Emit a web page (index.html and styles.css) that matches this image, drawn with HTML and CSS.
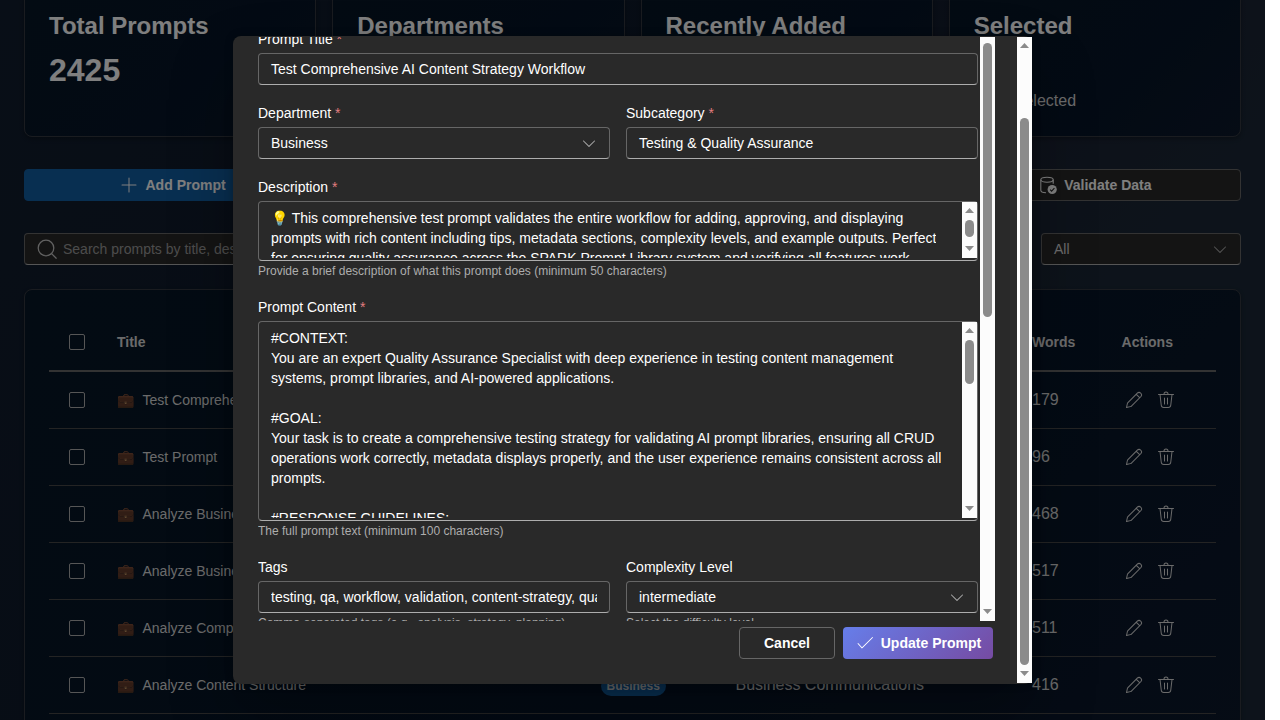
FILE: index.html
```html
<!DOCTYPE html>
<html lang="en">
<head>
<meta charset="utf-8">
<title>Prompt Library</title>
<link rel="stylesheet" href="styles.css">
</head>
<body>
<svg class="sprite" aria-hidden="true">
  <symbol id="edit" viewBox="0 0 20 20"><path d="M17.18 2.93a2.97 2.97 0 0 0-4.26-.06l-9.37 9.38c-.33.33-.56.74-.66 1.2l-.88 3.94a.5.5 0 0 0 .6.6l3.92-.87c.46-.1.9-.34 1.23-.68l9.36-9.36a2.97 2.97 0 0 0 .06-4.15Zm-3.55.65a1.97 1.97 0 1 1 2.8 2.8l-.68.66-2.8-2.8.68-.66Zm-1.38 1.38 2.8 2.8-7.99 7.97c-.2.2-.46.35-.74.41l-3.16.7.7-3.18c.07-.27.2-.51.4-.7l8-8Z"/></symbol>
  <symbol id="trash" viewBox="0 0 20 20"><path d="M8.5 4h3a1.5 1.5 0 0 0-3 0Zm-1 0a2.5 2.5 0 0 1 5 0h5a.5.5 0 0 1 0 1h-1.05l-1.2 10.34A3 3 0 0 1 12.27 18H7.73a3 3 0 0 1-2.98-2.66L3.55 5H2.5a.5.5 0 0 1 0-1h5ZM5.74 15.23A2 2 0 0 0 7.73 17h4.54a2 2 0 0 0 1.99-1.77L15.44 5H4.56l1.18 10.23ZM8.5 7.5c.28 0 .5.22.5.5v6a.5.5 0 0 1-1 0V8c0-.28.22-.5.5-.5ZM12 8a.5.5 0 0 0-1 0v6a.5.5 0 0 0 1 0V8Z"/></symbol>
  <symbol id="chevron" viewBox="0 0 20 20"><path d="M15.85 7.65c.2.2.2.5 0 .7l-5.46 5.49a.55.55 0 0 1-.78 0L4.15 8.35a.5.5 0 1 1 .7-.7L10 12.8l5.15-5.16c.2-.2.5-.2.7 0Z"/></symbol>
  <symbol id="check" viewBox="0 0 20 20"><path d="M3.37 10.17a.5.5 0 0 0-.74.66l4 4.5c.19.22.52.23.72.02l10.5-10.5a.5.5 0 0 0-.7-.7L7.02 14.27l-3.65-4.1Z"/></symbol>
  <symbol id="plus" viewBox="0 0 20 20"><path d="M10 2.5c.28 0 .5.22.5.5v6.5H17a.5.5 0 0 1 0 1h-6.5V17a.5.5 0 0 1-1 0v-6.5H3a.5.5 0 0 1 0-1h6.5V3c0-.28.22-.5.5-.5Z"/></symbol>
  <symbol id="search" viewBox="0 0 20 20"><g fill="none" stroke="currentColor" stroke-width="1.25" stroke-linecap="round"><circle cx="9" cy="9" r="7.8"/><path d="M14.6 14.6 19.2 19.2"/></g></symbol>
  <symbol id="database" viewBox="0 0 20 20"><g fill="none" stroke="currentColor" stroke-width="1.1"><ellipse cx="9" cy="4.7" rx="6.2" ry="2.5"/><path d="M2.8 4.7v10.6c0 1.5 2.2 2.4 5.2 2.5M15.2 4.7v4"/></g><circle cx="14.2" cy="14.5" r="4.6"/><path d="m12.1 14.7 1.5 1.5 2.8-3" fill="none" stroke="#292929" stroke-width="1.1"/></symbol>
  <symbol id="up" viewBox="0 0 15 15"><path d="M7.5 6 12 11H3Z"/></symbol>
  <symbol id="down" viewBox="0 0 15 15"><path d="M3 3h9L7.5 8Z"/></symbol>
</svg>

<div class="app">
  <div class="page">
    <section class="stats">
      <div class="card stat"><h2>Total Prompts</h2><p class="number">2425</p></div>
      <div class="card stat"><h2>Departments</h2></div>
      <div class="card stat"><h2>Recently Added</h2></div>
      <div class="card stat"><h2>Selected</h2><p class="note">None selected</p></div>
    </section>
    <section class="toolbar">
      <button class="btn primary"><svg class="icon"><use href="#plus"/></svg>Add Prompt</button>
      <button class="btn"></button>
      <button class="btn"></button>
      <button class="btn"><svg class="icon"><use href="#database"/></svg>Validate Data</button>
    </section>
    <section class="filters">
      <div class="field search"><svg class="icon"><use href="#search"/></svg><span>Search prompts by title, description</span></div>
      <div class="field select"><span>All</span><svg class="icon"><use href="#chevron"/></svg></div>
    </section>
    <section class="card table">
      <div class="row head"><i class="box"></i><span>Title</span><span></span><span></span><span>Words</span><span>Actions</span></div>
      <div class="row"><i class="box"></i><span class="name"><b>💼</b>Test Comprehensive</span><span></span><span></span><span class="num">179</span><span class="actions"><svg class="icon"><use href="#edit"/></svg><svg class="icon"><use href="#trash"/></svg></span></div>
      <div class="row"><i class="box"></i><span class="name"><b>💼</b>Test Prompt</span><span></span><span></span><span class="num">96</span><span class="actions"><svg class="icon"><use href="#edit"/></svg><svg class="icon"><use href="#trash"/></svg></span></div>
      <div class="row"><i class="box"></i><span class="name"><b>💼</b>Analyze Business</span><span></span><span></span><span class="num">468</span><span class="actions"><svg class="icon"><use href="#edit"/></svg><svg class="icon"><use href="#trash"/></svg></span></div>
      <div class="row"><i class="box"></i><span class="name"><b>💼</b>Analyze Business</span><span></span><span></span><span class="num">517</span><span class="actions"><svg class="icon"><use href="#edit"/></svg><svg class="icon"><use href="#trash"/></svg></span></div>
      <div class="row"><i class="box"></i><span class="name"><b>💼</b>Analyze Competitor</span><span></span><span></span><span class="num">511</span><span class="actions"><svg class="icon"><use href="#edit"/></svg><svg class="icon"><use href="#trash"/></svg></span></div>
      <div class="row"><i class="box"></i><span class="name"><b>💼</b>Analyze Content Structure</span><span><em class="badge">Business</em></span><span class="num">Business Communications</span><span class="num">416</span><span class="actions"><svg class="icon"><use href="#edit"/></svg><svg class="icon"><use href="#trash"/></svg></span></div>
      <div class="row"></div>
    </section>
  </div>

  <div class="backdrop">
    <div class="dialog">
      <div class="content">
        <div class="scroll">
          <form class="form">
            <div class="group plain"><label>Prompt Title <i>*</i></label><div class="input">Test Comprehensive AI Content Strategy Workflow</div></div>
            <div class="pair plain">
              <div class="group"><label>Department <i>*</i></label><div class="input"><span>Business</span><svg class="icon"><use href="#chevron"/></svg></div></div>
              <div class="group"><label>Subcategory <i>*</i></label><div class="input">Testing &amp; Quality Assurance</div></div>
            </div>
            <div class="group">
              <label>Description <i>*</i></label>
              <div class="area short">
                <div class="text">💡 This comprehensive test prompt validates the entire workflow for adding, approving, and displaying
prompts with rich content including tips, metadata sections, complexity levels, and example outputs. Perfect
for ensuring quality assurance across the SPARK Prompt Library system and verifying all features work</div>
                <div class="bar"><svg><use href="#up"/></svg><i class="thumb t-short"></i><svg><use href="#down"/></svg></div>
              </div>
              <small>Provide a brief description of what this prompt does (minimum 50 characters)</small>
            </div>
            <div class="group">
              <label>Prompt Content <i>*</i></label>
              <div class="area tall">
                <div class="text">#CONTEXT:
You are an expert Quality Assurance Specialist with deep experience in testing content management
systems, prompt libraries, and AI-powered applications.

#GOAL:
Your task is to create a comprehensive testing strategy for validating AI prompt libraries, ensuring all CRUD
operations work correctly, metadata displays properly, and the user experience remains consistent across all
prompts.

#RESPONSE GUIDELINES:</div>
                <div class="bar"><svg><use href="#up"/></svg><i class="thumb t-tall"></i><svg><use href="#down"/></svg></div>
              </div>
              <small>The full prompt text (minimum 100 characters)</small>
            </div>
            <div class="pair">
              <div class="group"><label>Tags</label><div class="input"><span class="clip">testing, qa, workflow, validation, content-strategy, quality</span></div><small>Comma-separated tags (e.g., analysis, strategy, planning)</small></div>
              <div class="group"><label>Complexity Level</label><div class="input"><span>intermediate</span><svg class="icon"><use href="#chevron"/></svg></div><small>Select the difficulty level</small></div>
            </div>
          </form>
          <div class="bar"><i class="thumb t-form"></i><svg><use href="#down"/></svg></div>
        </div>
        <div class="footer">
          <button class="btn cancel">Cancel</button>
          <button class="btn update"><svg class="icon"><use href="#check"/></svg>Update Prompt</button>
        </div>
      </div>
      <div class="bar"><svg><use href="#up"/></svg><i class="thumb t-dialog"></i><svg><use href="#down"/></svg></div>
    </div>
  </div>
</div>
</body>
</html>
```
FILE: styles.css
```css
* { box-sizing: border-box; }
body {
  margin: 0;
  height: 720px;
  overflow: hidden;
  background: #fff;
  font: 14px/20px "Liberation Sans", Arial, sans-serif;
}
h2, p { margin: 0; }
.sprite { position: absolute; width: 0; height: 0; }
.app {
  position: relative;
  width: 1265px;
  height: 720px;
  overflow: hidden;
  background: linear-gradient(135deg, #111d2e 0%, #0f1a2b 40%, #1b2233 58%, #1a2736 70%, #1a2736 100%);
  color: #fff;
}
.page { padding: 0 24px; }
.icon { width: 20px; height: 20px; flex: none; fill: currentColor; }

.card {
  background: linear-gradient(135deg, #071626, #061528 60%, #0c182b);
  border: 1px solid #343840;
  border-radius: 8px;
  box-shadow: 0 2px 4px rgba(0, 0, 0, .28);
}
.stats, .toolbar { display: grid; grid-template-columns: repeat(4, 1fr); gap: 16px; }
.stat { height: 145px; margin-top: -8px; padding: 17px 24px; }
.stat h2 { font-size: 24px; line-height: 32px; white-space: nowrap; }
.number { font-size: 32px; line-height: 40px; font-weight: 700; margin-top: 8px; }
.note { font-size: 16px; line-height: 24px; margin-top: 47px; color: #d6d6d6; }

.toolbar { margin-top: 32px; }
.btn {
  display: flex;
  align-items: center;
  justify-content: center;
  gap: 6px;
  height: 32px;
  padding: 0 12px;
  border: 1px solid #666;
  border-radius: 4px;
  background: #292929;
  color: #fff;
  font: 700 14px/20px "Liberation Sans", Arial, sans-serif;
  letter-spacing: .02px;
  white-space: nowrap;
}
.btn.primary { background: #115ea3; border-color: #115ea3; padding-left: 17px; }

.filters { display: flex; gap: 16px; margin-top: 32px; }
.field {
  display: flex;
  align-items: center;
  height: 32px;
  padding: 0 12px;
  border: 1px solid #666;
  border-bottom-color: #adadad;
  border-radius: 4px;
  background: #292929;
  color: #d6d6d6;
}
.search { flex: 1; gap: 6px; color: #999; }
.search .icon { color: #c4c4c4; }
.select { width: 200px; justify-content: space-between; padding-right: 10px; }
.select .icon { color: #adadad; }

.table { height: 470px; margin-top: 24px; padding: 24px; }
.row {
  display: grid;
  grid-template-columns: 68px 483.5px 135px 296.5px 89.6px 1fr;
  align-items: center;
  height: 57px;
  border-bottom: 1px solid #484848;
  white-space: nowrap;
  color: #d6d6d6;
}
.head { height: 58px; border-bottom: 2px solid #666; font-weight: 700; }
.box { width: 16px; height: 16px; margin-left: 20px; border: 1px solid #adadad; border-radius: 2px; }
.name { display: flex; gap: 8.5px; }
.name b { font-weight: 400; opacity: .8; }
.num { font-size: 16px; }
.actions { display: flex; gap: 12px; padding-left: 2.4px; }
.badge {
  display: inline-block;
  height: 20px;
  padding: 0 6px;
  border-radius: 10px;
  background: #115ea3;
  font: 700 12px/20px "Liberation Sans", Arial, sans-serif;
}

.backdrop { position: absolute; inset: 0; background: rgba(0, 0, 0, .5); }
.dialog {
  position: absolute;
  left: 233px;
  top: 36px;
  display: flex;
  width: 799px;
  height: 648px;
  padding: 1px 0;
  border-radius: 8px;
  background: #292929;
  box-shadow: 0 0 8px rgba(0, 0, 0, .24), 0 32px 64px rgba(0, 0, 0, .28);
}
.content { width: 784px; padding: 0 22px 0 25px; }
.scroll { display: flex; gap: 2px; height: 584px; overflow: hidden; }
.form { display: flex; flex-direction: column; width: 720px; gap: 16px; margin-top: -8px; }
.form > * { flex: none; }
.pair { display: grid; grid-template-columns: 1fr 1fr; gap: 16px; }
.plain { padding-bottom: 2px; }
.group { display: flex; flex-direction: column; min-width: 0; }
.group label { line-height: 20px; margin-bottom: 4px; }
label i { color: #e37d80; font-style: normal; }
.input {
  display: flex;
  align-items: center;
  justify-content: space-between;
  height: 32px;
  padding: 0 12px;
  border: 1px solid #666;
  border-bottom-color: #adadad;
  border-radius: 4px;
  white-space: nowrap;
}
.input .icon { margin-right: -2px; color: #adadad; }
.clip { overflow: hidden; }
.group small { height: 20px; font-size: 12px; line-height: 20px; color: #adadad; }
.area {
  display: flex;
  justify-content: space-between;
  padding-bottom: 2px;
  border: 1px solid #666;
  border-bottom-color: #adadad;
  border-radius: 4px;
}
.short { height: 60px; }
.tall { height: 200px; }
.text { padding: 6px 0 0 12px; overflow: hidden; white-space: pre; }

.bar { display: flex; flex-direction: column; width: 15px; flex: none; background: #fcfcfc; }
.bar svg { width: 15px; height: 15px; flex: none; fill: #8b8b8b; }
.bar svg:last-child { margin-top: auto; }
.thumb { width: 9px; margin-left: 3px; border-radius: 5px; background: #8b8b8b; }
.t-short { height: 17px; margin-top: 3px; }
.t-tall { height: 44px; margin-top: 3px; }
.t-form { height: 274px; margin-top: 6px; }
.t-dialog { height: 547px; margin-top: 66px; }

.footer { display: flex; justify-content: flex-end; gap: 8px; margin: 6px 2px 0 0; }
.cancel { width: 96px; }
.update { width: 150px; border: 0; background: linear-gradient(135deg, #667eea, #764ba2); }
```
